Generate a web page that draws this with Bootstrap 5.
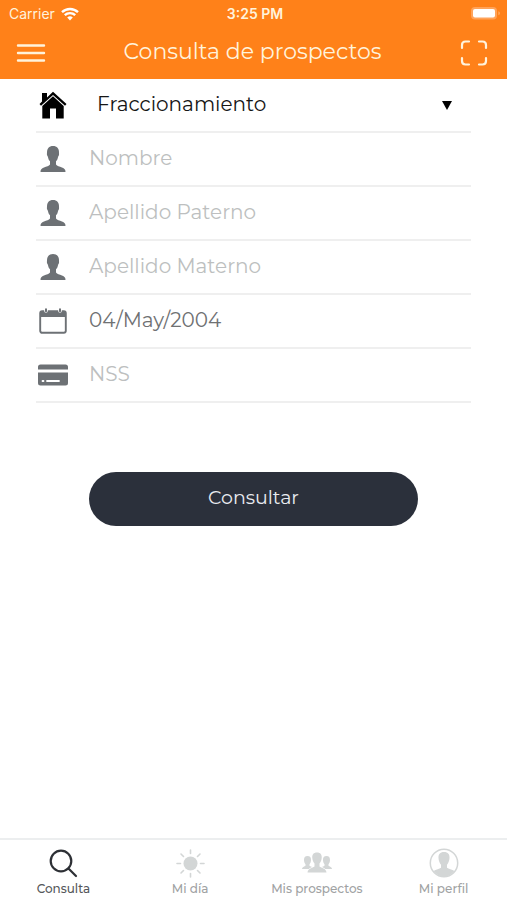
<!DOCTYPE html>
<html lang="es">
<head>
<meta charset="utf-8">
<meta name="viewport" content="width=device-width, initial-scale=1">
<title>Consulta de prospectos</title>
<link href="https://cdn.jsdelivr.net/npm/bootstrap@5.3.0/dist/css/bootstrap.min.css" rel="stylesheet">
<style>
  body { font-family: Montserrat, Inter, "Liberation Sans", sans-serif; background: #fff; }
  svg { display: block; flex: none; }
  .app-top { background: #ff8119; color: #fff3dc; height: 79px; }
  .status-row { font-family: Inter, "Liberation Sans", sans-serif; height: 27px; padding: 0 6px 0 9px; font-size: 14px; line-height: 27px; }
  .status-side { flex: 1 1 0; gap: 6px; }
  .status-time { font-weight: 600; }
  .title-row { height: 52px; padding: 0 18px 0 16px; }
  .app-title { font-size: 22px; font-weight: 400; line-height: 28px; margin: 0 0 2px; }
  .bar-btn { color: #fff3dc; width: 30px; border: 0; }
  .search-form { padding: 0 36px; }
  .field-row { height: 54px; border-bottom: 2px solid #efefef; gap: 19px; }
  .field-icon { flex: none; width: 34px; color: #6d7175; }
  .field-row .form-control, .field-row .form-select { font-size: 20px; line-height: 28px; padding: 0 0 2px; border: 0; border-radius: 0; background-color: transparent; color: #6f7173; }
  .field-row .form-control::placeholder { color: #bdbfc0; }
  .field-row .form-select { color: #161616; padding: 0 32px 2px 8px; background-position: right 19px center; background-size: 10px 9px;
    background-image: url("data:image/svg+xml,%3Csvg xmlns='http://www.w3.org/2000/svg' viewBox='0 0 10 9'%3E%3Cpath d='M0 0h10L5 9z'/%3E%3C/svg%3E"); }
  .submit-wrap { padding: 69px 53px 0; }
  .submit-btn { height: 54px; background: #2b303b; color: #e9ebf0; font-size: 19px; line-height: 24px; padding: 0 0 3px; --bs-btn-hover-bg: #3a404d; --bs-btn-hover-color: #fff; }
  .tab-bar { height: 62px; border-top: 2px solid #eceeef; }
  .tab-item { flex: 1 1 0; gap: 2px; padding-top: 8px; color: #a0a2a3; font-size: 12px; font-weight: 500; line-height: 18px; }
  .tab-item svg { color: #d3d6d6; }
  .tab-item.active { color: #55585b; }
  .tab-item.active svg { color: #2d3035; }
</style>
<script src="https://cdn.jsdelivr.net/npm/bootstrap@5.3.0/dist/js/bootstrap.bundle.min.js" defer></script>
</head>
<body class="d-flex flex-column min-vh-100">
<svg width="0" height="0" class="position-absolute" aria-hidden="true">
  <symbol id="person" viewBox="0 0 26 26"><path fill="currentColor" d="M13 0c4 0 6 2.400 6 6.500 0 1 .2 1.500 0 2.500-.2 1-.8 1.200-1 2.200-.4 2-1 3-2 4v3.300c1 1.700 3.500 2 6 3 2.500.9 3.500 2 3.500 4.500H.5c0-2.500 1-3.600 3.500-4.500 2.500-1 5-1.300 6-3v-3.300c-1-1-1.600-2-2-4-.2-1-.8-1.200-1-2.200-.2-1 0-1.500 0-2.500C7 2.400 9 0 13 0z"/></symbol>
</svg>

<header class="app-top">
  <div class="status-row d-flex align-items-center">
    <div class="status-side d-flex align-items-center">
      <span>Carrier</span>
      <svg width="18" height="14" viewBox="0 0 18 14" fill="none" stroke="#fff" stroke-width="2.400"><path d="M1 5.200a11.500 11.500 0 0 1 16 0M3.800 8.200a7.500 7.500 0 0 1 10.400 0"/><path d="M9 13.500 6.200 10.600a4 4 0 0 1 5.600 0z" fill="#fff" stroke="none"/></svg>
    </div>
    <span class="status-time">3:25 PM</span>
    <div class="status-side d-flex justify-content-end">
      <svg width="31" height="15" viewBox="0 0 31 15"><rect x="1" y="1" width="26" height="12.500" rx="4" fill="#ffa35a"/><rect x="3" y="3" width="22" height="8.500" rx="2" fill="#fff"/><path d="M28.500 5.300c1.700.6 1.700 3.400 0 4z" fill="#ffb679"/></svg>
    </div>
  </div>
  <div class="title-row d-flex align-items-center justify-content-between">
    <button type="button" class="btn bar-btn p-0" aria-label="Menú">
      <svg width="30" height="20" viewBox="0 0 30 20" stroke="currentColor" stroke-width="2.400" stroke-linecap="round"><path d="M2 2.500h26M2 10h26M2 17.500h26"/></svg>
    </button>
    <h1 class="app-title">Consulta de prospectos</h1>
    <button type="button" class="btn bar-btn p-0" aria-label="Escanear">
      <svg width="30" height="26" viewBox="0 0 30 26" fill="none" stroke="currentColor" stroke-width="2.200" stroke-linecap="round"><path d="M3 8V5q0-3.500 3.500-3.500H10M20 1.500h3.500Q27 1.500 27 5v3M27 18v3q0 3.500-3.500 3.500H20M10 24.500H6.500Q3 24.500 3 21v-3"/></svg>
    </button>
  </div>
</header>

<main class="flex-grow-1">
  <form class="search-form">
    <div class="field-row d-flex align-items-center">
      <label class="field-icon d-flex justify-content-center text-black" for="fracc">
        <svg width="28" height="28" viewBox="0 0 28 28" role="img" aria-label="Fraccionamiento"><path fill="currentColor" d="M3 2h5v4.500l6-5.800L27.500 13l-1.500 1.700L14 3.900 2 14.700.5 13 3 10.500z"/><path fill="currentColor" d="M14 5.200 24.700 15V27.500H17V17.500h-6v10H3.300V15z"/></svg>
      </label>
      <select class="form-select" id="fracc"><option>Fraccionamiento</option></select>
    </div>
    <div class="field-row d-flex align-items-center">
      <label class="field-icon d-flex justify-content-center" for="nombre"><svg width="26" height="26" role="img" aria-label="Nombre"><use href="#person"/></svg></label>
      <input class="form-control" id="nombre" type="text" placeholder="Nombre">
    </div>
    <div class="field-row d-flex align-items-center">
      <label class="field-icon d-flex justify-content-center" for="paterno"><svg width="26" height="26" role="img" aria-label="Apellido Paterno"><use href="#person"/></svg></label>
      <input class="form-control" id="paterno" type="text" placeholder="Apellido Paterno">
    </div>
    <div class="field-row d-flex align-items-center">
      <label class="field-icon d-flex justify-content-center" for="materno"><svg width="26" height="26" role="img" aria-label="Apellido Materno"><use href="#person"/></svg></label>
      <input class="form-control" id="materno" type="text" placeholder="Apellido Materno">
    </div>
    <div class="field-row d-flex align-items-center">
      <label class="field-icon d-flex justify-content-center" for="fecha">
        <svg width="28" height="26" viewBox="0 0 28 26" role="img" aria-label="Fecha de nacimiento"><rect x="1.200" y="3.200" width="25.600" height="21.600" rx="2" fill="none" stroke="currentColor" stroke-width="1.900"/><path fill="currentColor" d="M1 3h26v6H1z"/><path d="M7 1v2M21 1v2" stroke="#fff" stroke-width="3.600" stroke-linecap="round"/><path d="M7 1.200v2M21 1.200v2" stroke="currentColor" stroke-width="2" stroke-linecap="round"/></svg></label>
      <input class="form-control" id="fecha" type="text" value="04/May/2004">
    </div>
    <div class="field-row d-flex align-items-center">
      <label class="field-icon d-flex justify-content-center" for="nss">
        <svg width="30" height="22" viewBox="0 0 30 22" role="img" aria-label="NSS"><path fill="currentColor" d="M0 5.500V3q0-2.500 2.500-2.500h25Q30 .5 30 3v2.500zM0 8.500h30V19q0 2.500-2.500 2.500h-25Q0 21.500 0 19z"/><path d="M4.500 17h1M9 17h12" stroke="#fff" stroke-width="1.800" stroke-linecap="round"/></svg></label>
      <input class="form-control" id="nss" type="text" placeholder="NSS">
    </div>
    <div class="submit-wrap">
      <button type="button" class="btn submit-btn rounded-pill w-100 border-0">Consultar</button>
    </div>
  </form>
</main>

<nav class="tab-bar d-flex" aria-label="Principal">
  <a href="#" class="tab-item active d-flex flex-column align-items-center text-decoration-none" aria-current="page">
    <svg width="30" height="30" viewBox="0 0 30 30" fill="none" stroke="currentColor" stroke-width="2.200" stroke-linecap="round"><circle cx="13" cy="13" r="10.300"/><path d="m20.500 20.500 7.500 7.500"/></svg>
    Consulta</a>
  <a href="#" class="tab-item d-flex flex-column align-items-center text-decoration-none">
    <svg width="30" height="30" viewBox="0 0 30 30" stroke="currentColor" stroke-width="1.600" stroke-linecap="round"><circle cx="15.500" cy="15.500" r="7" fill="currentColor" stroke="none"/><path d="M15.500 2v3.500M15.500 25.500V29M2 15.500h3.500M25.500 15.500H29M6 6l2.500 2.500M22.500 22.500 25 25M25 6l-2.500 2.500M8.500 22.500 6 25"/></svg>
    Mi día</a>
  <a href="#" class="tab-item d-flex flex-column align-items-center text-decoration-none">
    <svg width="30" height="30" viewBox="0 0 30 30"><g fill="currentColor"><path d="M5.500 8c2.500 0 3.700 1.600 3.500 4.200-.1 2-.8 3-1.500 4v1.500c1 .7 2 .9 2.500 1.300-1.500.7-2.500 1-3 2H0c0-1.800 1.500-2 3.500-3.300v-1.500c-.7-1-1.400-2-1.500-4C1.900 9.600 3 8 5.500 8zM24.500 8c-2.500 0-3.700 1.600-3.500 4.200.1 2 .8 3 1.500 4v1.500c-1 .7-2 .9-2.500 1.300 1.500.7 2.500 1 3 2h7c0-1.800-1.500-2-3.500-3.300v-1.500c.7-1 1.400-2 1.500-4 .1-2.600-1-4.200-3.500-4.200z"/><path d="M15 4.500c3.500 0 5 2.200 4.700 5.500-.2 2.700-1.200 4-2.200 5.500v3c2 1.800 6.500 1.500 7 6h-19c.5-4.500 5-4.200 7-6v-3c-1-1.500-2-2.800-2.200-5.500-.3-3.300 1.200-5.500 4.700-5.500z"/></g></svg>
    Mis prospectos</a>
  <a href="#" class="tab-item d-flex flex-column align-items-center text-decoration-none">
    <svg width="30" height="30" viewBox="0 0 30 30"><circle cx="15" cy="15" r="13.700" fill="none" stroke="currentColor" stroke-width="1.500"/><path fill="currentColor" d="M15 4c4.200 0 5.700 2.500 5.500 6-.1 3-1.200 5-2.500 6.800v3c1.500 1.400 5 1.500 7.500 3.200C22.500 26.800 19 28.500 15 28.500S7.500 26.800 4.500 23c2.500-1.700 6-1.800 7.500-3.200v-3C10.700 15 9.600 13 9.500 10 9.300 6.500 10.800 4 15 4z"/></svg>
    Mi perfil</a>
</nav>
</body>
</html>
